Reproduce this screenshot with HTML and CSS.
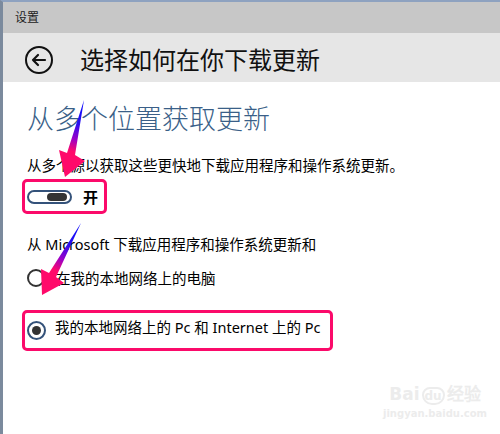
FILE: index.html
```html
<!DOCTYPE html>
<html lang="zh-CN">
<head>
    <meta charset="UTF-8">
    <title>设置</title>
    <link rel="stylesheet" href="styles.css">
</head>
<body>

    <div class="window">
        <div class="titlebar">设置</div>

        <div class="header">
            <svg class="back" width="30" height="30" viewBox="0 0 30 30">
                <circle cx="15" cy="15" r="13" fill="none" stroke="#111" stroke-width="2"/>
                <path d="M9 15 H21 M14 10 L9 15 L14 20" fill="none" stroke="#111" stroke-width="2.2" stroke-linecap="round" stroke-linejoin="round"/>
            </svg>
            <h1>选择如何在你下载更新</h1>
        </div>

        <div class="content">
            <h2>从多个位置获取更新</h2>
            <p class="desc">从多个源以获取这些更快地下载应用程序和操作系统更新。</p>

            <div class="mark mark-toggle">
                <span class="toggle"><span class="thumb"></span></span>
                <span class="state">开</span>
            </div>

            <p class="desc second">从 Microsoft 下载应用程序和操作系统更新和</p>

            <div class="radio-row">
                <span class="radio"></span>
                <span class="label">在我的本地网络上的电脑</span>
            </div>

            <div class="mark mark-radio">
                <span class="radio checked"></span>
                <span class="label">我的本地网络上的 Pc 和 Internet 上的 Pc</span>
            </div>
        </div>

        <!-- hand-drawn arrows pasted over the screenshot -->
        <svg class="arrows" width="500" height="434" viewBox="0 0 500 434">
            <defs>
                <linearGradient id="g1" gradientUnits="userSpaceOnUse" x1="84" y1="101" x2="65" y2="177">
                    <stop offset="0" stop-color="#0a0aff"/>
                    <stop offset="0.3" stop-color="#2a10f0"/>
                    <stop offset="0.5" stop-color="#9a00c8"/>
                    <stop offset="0.66" stop-color="#ff0a6a"/>
                    <stop offset="1" stop-color="#ff0a6a"/>
                </linearGradient>
                <linearGradient id="g2" gradientUnits="userSpaceOnUse" x1="81" y1="223" x2="42" y2="295">
                    <stop offset="0" stop-color="#0a0aff"/>
                    <stop offset="0.3" stop-color="#2a10f0"/>
                    <stop offset="0.5" stop-color="#9a00c8"/>
                    <stop offset="0.66" stop-color="#ff0a6a"/>
                    <stop offset="1" stop-color="#ff0a6a"/>
                </linearGradient>
            </defs>
            <polygon fill="url(#g1)" points="84,100 75,155 85,161 65,177 59,150 67,153"/>
            <polygon fill="url(#g2)" points="81,223 56,277 64,283 42,295 41,269 49,273"/>
        </svg>

        <div class="watermark">
            <div class="wm-logo">Bai<span class="wm-du">du</span>经验</div>
            <div class="wm-url">jingyan.baidu.com</div>
        </div>
    </div>

</body>
</html>
```

FILE: styles.css
```css
html, body {
    margin: 0;
    padding: 0;
}
body {
    width: 500px;
    height: 434px;
    overflow: hidden;
    font-family: "Noto Sans", "Noto Sans CJK SC", sans-serif;
    color: #000;
    background: #fff;
}
.window {
    position: relative;
    height: 432px;
    border-top: 2px solid #8ea2c0;
    border-left: 3px solid #7b8a9d;
    background: #fff;
}
.titlebar {
    height: 31px;
    line-height: 31px;
    padding-left: 12px;
    background: #c7c7c7;
    font-size: 12px;
    color: #222;
}
/* page header with back button */
.header {
    display: flex;
    align-items: center;
    height: 49px;
    padding: 4px 0 0 21px;
    box-sizing: border-box;
    background: #e6e6e6;
}
.back { display: block; }
.header h1 {
    margin: 0 0 0 26px;
    font-size: 24px;
    font-weight: normal;
    line-height: 30px;
    color: #111;
}
.content {
    padding: 20px 0 0 24px;
}
.content h2 {
    margin: 0;
    font-size: 27px;
    font-weight: 300;
    line-height: 34px;
    color: #3a5f88;
}
.desc {
    margin: 19px 0 0;
    font-size: 14.5px;
    line-height: 20px;
}
.desc.second { margin-top: 20px; }
/* pink boxes drawn over the screenshot */
.mark {
    display: flex;
    align-items: center;
    margin-left: -5px;
    border: 3px solid #fb0a6a;
    border-radius: 5px;
    box-sizing: border-box;
}
.mark-toggle {
    width: 85px;
    height: 35px;
    margin-top: 4px;
    padding-left: 2px;
}
.toggle {
    display: flex;
    align-items: center;
    justify-content: flex-end;
    width: 45px;
    height: 14px;
    padding-right: 3px;
    border: 2px solid #34527a;
    border-radius: 9px;
    box-sizing: border-box;
}
.thumb {
    width: 20px;
    height: 8px;
    border-radius: 4px;
    background: #333;
}
.state {
    margin-left: 11px;
    font-size: 15px;
    font-weight: bold;
    line-height: 20px;
}
.radio-row {
    display: flex;
    align-items: center;
    height: 20px;
    margin-top: 14px;
}
.radio {
    width: 18px;
    height: 18px;
    border: 2px solid #333;
    border-radius: 50%;
    box-sizing: border-box;
    flex: none;
    display: flex;
    align-items: center;
    justify-content: center;
}
.radio.checked {
    width: 19px;
    height: 19px;
    border-color: #34527a;
}
.radio.checked::after {
    content: "";
    width: 9px;
    height: 9px;
    border-radius: 50%;
    background: #333;
}
.label {
    margin-left: 11px;
    font-size: 14.5px;
    line-height: 20px;
}
.mark-radio {
    width: 311px;
    height: 41px;
    margin-top: 22px;
    padding-left: 2px;
}
.mark-radio .label {
    margin-left: 9px;
    padding-bottom: 8px;
}
.arrows {
    position: absolute;
    left: -3px;
    top: -2px;
    pointer-events: none;
}
/* faint baidu watermark in the corner */
.watermark {
    position: absolute;
    left: 380px;
    top: 378px;
    color: #ececec;
    font-family: "DejaVu Sans", sans-serif;
    font-weight: bold;
    text-align: center;
}
.wm-logo {
    font-size: 17px;
    line-height: 28px;
}
.wm-du {
    display: inline-block;
    margin: 0 2px;
    padding: 0 1px;
    border: 2px solid #ececec;
    border-radius: 8px 8px 10px 10px;
    font-size: 12px;
    line-height: 14px;
}
.wm-logo, .wm-url { white-space: nowrap; }
.wm-url {
    font-size: 10px;
    line-height: 12px;
}
```
